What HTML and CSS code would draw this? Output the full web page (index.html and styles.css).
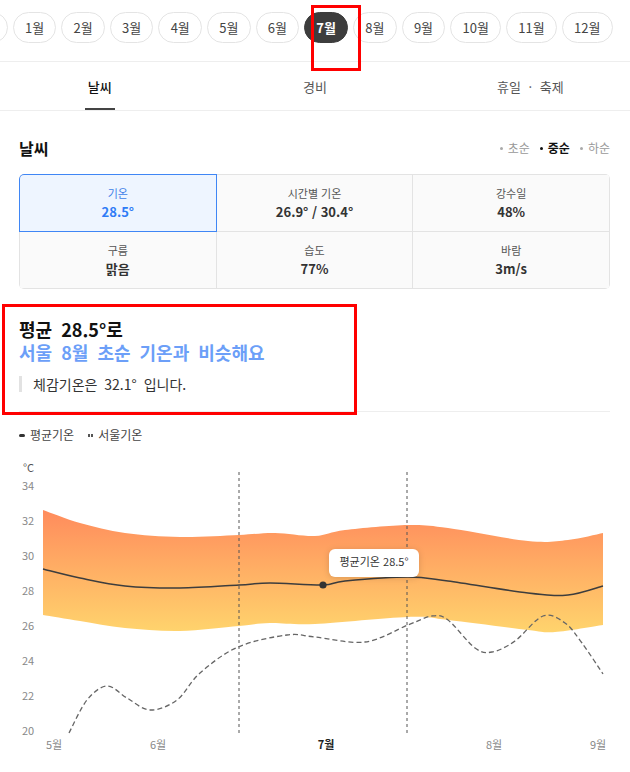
FILE: index.html
```html
<!DOCTYPE html>
<html lang="ko">
<head>
  <meta charset="UTF-8" />
  <title>여행 날씨</title>
  <meta name="viewport" content="width=device-width, initial-scale=1" />
  <link rel="stylesheet" href="styles.css">
</head>
<body>
  <!-- month picker -->
  <div class="month-bar">
    <div class="month-track">
      <span class="chip">12월</span>
      <span class="chip">1월</span>
      <span class="chip">2월</span>
      <span class="chip">3월</span>
      <span class="chip">4월</span>
      <span class="chip">5월</span>
      <span class="chip">6월</span>
      <span class="chip active">7월</span>
      <span class="chip">8월</span>
      <span class="chip">9월</span>
      <span class="chip">10월</span>
      <span class="chip">11월</span>
      <span class="chip">12월</span>
    </div>
  </div>

  <nav class="tabs">
    <a class="tab active">날씨</a>
    <a class="tab">경비</a>
    <a class="tab">휴일 · 축제</a>
  </nav>

  <section class="weather">
    <div class="section-head">
      <h2>날씨</h2>
      <ul class="period">
        <li>초순</li>
        <li class="on">중순</li>
        <li>하순</li>
      </ul>
    </div>

    <div class="stats">
      <div class="stat selected"><span class="label">기온</span><strong>28.5°</strong></div>
      <div class="stat"><span class="label">시간별 기온</span><strong>26.9° / 30.4°</strong></div>
      <div class="stat"><span class="label">강수일</span><strong>48%</strong></div>
      <div class="stat"><span class="label">구름</span><strong>맑음</strong></div>
      <div class="stat"><span class="label">습도</span><strong>77%</strong></div>
      <div class="stat"><span class="label">바람</span><strong>3m/s</strong></div>
    </div>

    <div class="summary">
      <p class="summary-title">평균 28.5°로</p>
      <p class="summary-sub">서울 8월 초순 기온과 비슷해요</p>
      <p class="summary-note">체감기온은 32.1° 입니다.</p>
    </div>

    <div class="legend">
      <span class="key key-mean">평균기온</span>
      <span class="key key-seoul">서울기온</span>
    </div>

    <svg class="chart" viewBox="0 455 630 317" width="630" height="317">
      <defs>
        <linearGradient id="bandFill" x1="0" y1="510" x2="0" y2="636" gradientUnits="userSpaceOnUse">
          <stop offset="0" stop-color="#ff8a5c" />
          <stop offset="1" stop-color="#ffd56d" />
        </linearGradient>
      </defs>

      <g class="y-axis">
        <text class="unit" x="23" y="471">°C</text>
        <text x="22" y="489">34</text>
        <text x="22" y="524">32</text>
        <text x="22" y="559">30</text>
        <text x="22" y="594">28</text>
        <text x="22" y="629">26</text>
        <text x="22" y="664">24</text>
        <text x="22" y="699">22</text>
        <text x="22" y="734">20</text>
      </g>

      <path id="band" fill="url(#bandFill)" />
      <line class="guide" x1="239" y1="474" x2="239" y2="738" />
      <line class="guide" x1="407" y1="474" x2="407" y2="738" />
      <path id="seoul" class="seoul-line" />
      <path id="mean" class="mean-line" />
      <circle class="mean-dot" cx="323" cy="587" r="3.6" />

      <g class="tooltip">
        <rect x="329" y="551" width="90" height="28" rx="6" />
        <text x="374" y="565.5">평균기온 28.5°</text>
      </g>

      <g class="x-axis">
        <text x="54" y="748">5월</text>
        <text x="158" y="748">6월</text>
        <text class="now" x="326" y="748">7월</text>
        <text x="494" y="748">8월</text>
        <text x="598" y="748">9월</text>
      </g>
    </svg>
  </section>

  <!-- review marks -->
  <div class="mark mark-month"></div>
  <div class="mark mark-summary"></div>

  <script>
    const upper = [[43,512],[80,525],[125,535],[180,539],[239,537],[275,535],[315,538],[345,532],[408,527],[448,530],[528,543],[568,542],[603,535]];
    const lower = [[43,617],[80,623],[125,630],[180,633],[239,628],[270,625],[315,626],[408,619],[448,622],[528,632],[555,634],[603,627]];
    const mean = [[43,571],[80,580],[125,588],[180,590],[239,587],[270,585],[323,587],[345,583],[408,579],[448,583],[528,595],[568,597],[603,588]];
    const seoul = [[69,735],[87,702],[107,688],[127,700],[150,712],[177,702],[200,675],[238,649],[287,637],[315,639],[365,644],[408,627],[432,618],[448,622],[475,650],[492,654],[515,643],[543,618],[565,625],[582,645],[603,676]];

    // catmull-rom -> cubic bezier
    function curve(pts) {
      let d = '';
      for (let i = 0; i < pts.length - 1; i++) {
        const p0 = pts[i - 1] || pts[i];
        const p1 = pts[i];
        const p2 = pts[i + 1];
        const p3 = pts[i + 2] || p2;
        const c1 = [p1[0] + (p2[0] - p0[0]) / 6, p1[1] + (p2[1] - p0[1]) / 6];
        const c2 = [p2[0] - (p3[0] - p1[0]) / 6, p2[1] - (p3[1] - p1[1]) / 6];
        d += ` C${c1.join(',')} ${c2.join(',')} ${p2.join(',')}`;
      }
      return d;
    }

    const back = lower.slice().reverse();
    document.getElementById('band').setAttribute('d', `M${upper[0]}${curve(upper)} L${back[0]}${curve(back)} Z`);
    document.getElementById('mean').setAttribute('d', `M${mean[0]}${curve(mean)}`);
    document.getElementById('seoul').setAttribute('d', `M${seoul[0]}${curve(seoul)}`);
  </script>
</body>
</html>
```

FILE: styles.css
```css
html, body {
  margin: 0;
  padding: 0;
  background: #fff;
  overflow-x: hidden;
}

body {
  position: relative;
  width: 630px;
  font-family: "Noto Sans CJK KR", "Noto Sans", sans-serif;
  color: #222;
}

/* month chips */
.month-bar {
  overflow: hidden;
  padding: 12px 0 18px;
  border-bottom: 1px solid #eee;
}

.month-track {
  display: flex;
  gap: 5px;
  margin-left: -43px;
}

.chip {
  flex: none;
  box-sizing: border-box;
  height: 31px;
  padding: 0 11.2px;
  border: 1px solid #e4e4e4;
  border-radius: 16px;
  font-size: 13px;
  line-height: 29px;
  color: #444;
}

.chip.active {
  background: #3d3d3d;
  border-color: #3d3d3d;
  color: #fff;
  font-weight: 700;
}

/* tabs */
.tabs {
  display: grid;
  grid-template-columns: repeat(3, 1fr);
  margin: 0 -8px;
  border-bottom: 1px solid #eee;
}

.tab {
  position: relative;
  height: 48px;
  display: flex;
  align-items: center;
  justify-content: center;
  font-size: 13px;
  word-spacing: 4px;
  color: #555;
}

.tab.active {
  color: #111;
  font-weight: 500;
}

.tab.active::after {
  content: "";
  position: absolute;
  bottom: 0;
  left: 50%;
  width: 30px;
  height: 2px;
  margin-left: -15px;
  background: #444;
}

/* weather */
.weather {
  padding: 0 20px 0 19px;
}

.section-head {
  display: flex;
  align-items: center;
  justify-content: space-between;
  margin-top: 25px;
  height: 24px;
}

.section-head h2 {
  margin: 0;
  font-size: 16px;
  font-weight: 700;
  line-height: 24px;
  color: #111;
}

.period {
  display: flex;
  gap: 10px;
  margin: 0;
  padding: 0;
  list-style: none;
  font-size: 12px;
  line-height: 18px;
  color: #999;
}

.period li {
  display: flex;
  align-items: center;
}

.period li::before {
  content: "";
  width: 3px;
  height: 3px;
  margin-right: 5px;
  border-radius: 50%;
  background: #aaa;
}

.period li.on {
  color: #111;
  font-weight: 700;
}

.period li.on::before {
  background: #111;
}

.stats {
  display: grid;
  grid-template-columns: repeat(3, 1fr);
  gap: 1px;
  margin-top: 14px;
  padding: 1px;
  border-radius: 5px;
  background: #e3e3e3;
  overflow: hidden;
}

.stat {
  height: 56px;
  box-sizing: border-box;
  padding-top: 10px;
  display: flex;
  flex-direction: column;
  align-items: center;
  background: #fafafa;
}

.stat .label {
  font-size: 11px;
  line-height: 16px;
  color: #555;
}

.stat strong {
  margin-top: 2px;
  font-size: 13px;
  line-height: 18px;
  font-weight: 700;
  color: #333;
}

.stat.selected {
  position: relative;
  z-index: 1;
  border-top-left-radius: 4px;
  background: #eef5ff;
  box-shadow: 0 0 0 1px #3f86f5;
}

.stat.selected .label {
  color: #3f7fe8;
}

.stat.selected strong {
  color: #2f7cf6;
}

.summary {
  padding: 29px 0 19px;
  border-bottom: 1px solid #eee;
}

.summary-title,
.summary-sub {
  margin: 0;
  font-size: 18px;
  line-height: 23px;
  font-weight: 700;
  word-spacing: 4px;
  color: #111;
}

.summary-sub {
  color: #6c9ff8;
}

.summary-note {
  margin: 12px 0 0;
  padding-left: 11px;
  border-left: 3px solid #e2e2e2;
  font-size: 14px;
  line-height: 16px;
  word-spacing: 3px;
  color: #333;
}

.legend {
  display: flex;
  gap: 14px;
  margin-top: 15px;
  font-size: 12px;
  line-height: 16px;
  color: #444;
}

.key {
  display: flex;
  align-items: center;
}

.key::before {
  content: "";
  margin-right: 5px;
}

.key-mean::before {
  width: 6px;
  height: 3px;
  border-radius: 2px;
  background: #333;
}

.key-seoul::before {
  width: 5px;
  height: 3px;
  background: linear-gradient(90deg, #555 0 2px, transparent 2px 3px, #555 3px 5px);
}

/* chart */
.chart {
  display: block;
  margin: 10px -20px 0 -19px;
  font-family: "Noto Sans CJK KR", "Noto Sans", sans-serif;
}

.chart text {
  dominant-baseline: middle;
}

.y-axis text {
  font-size: 11px;
  fill: #888;
}

.y-axis .unit {
  fill: #555;
}

.x-axis text {
  font-size: 11px;
  fill: #888;
  text-anchor: middle;
}

.x-axis .now {
  fill: #222;
  font-weight: 700;
}

.guide {
  stroke: #555;
  stroke-width: 1;
  stroke-dasharray: 3 3;
}

.mean-line {
  fill: none;
  stroke: #3d3d3d;
  stroke-width: 1.5;
}

.seoul-line {
  fill: none;
  stroke: #666;
  stroke-width: 1.3;
  stroke-dasharray: 5 3;
}

.mean-dot {
  fill: #333;
}

.tooltip rect {
  fill: #fff;
  filter: drop-shadow(0 1px 3px rgba(0, 0, 0, 0.15));
}

.tooltip text {
  font-size: 11px;
  fill: #333;
  text-anchor: middle;
}

/* red review boxes */
.mark {
  position: absolute;
  box-sizing: border-box;
  border: 3px solid #f00;
  pointer-events: none;
}

.mark-month {
  left: 311px;
  top: 5px;
  width: 50px;
  height: 66px;
}

.mark-summary {
  left: 2px;
  top: 304px;
  width: 355px;
  height: 111px;
}
```
